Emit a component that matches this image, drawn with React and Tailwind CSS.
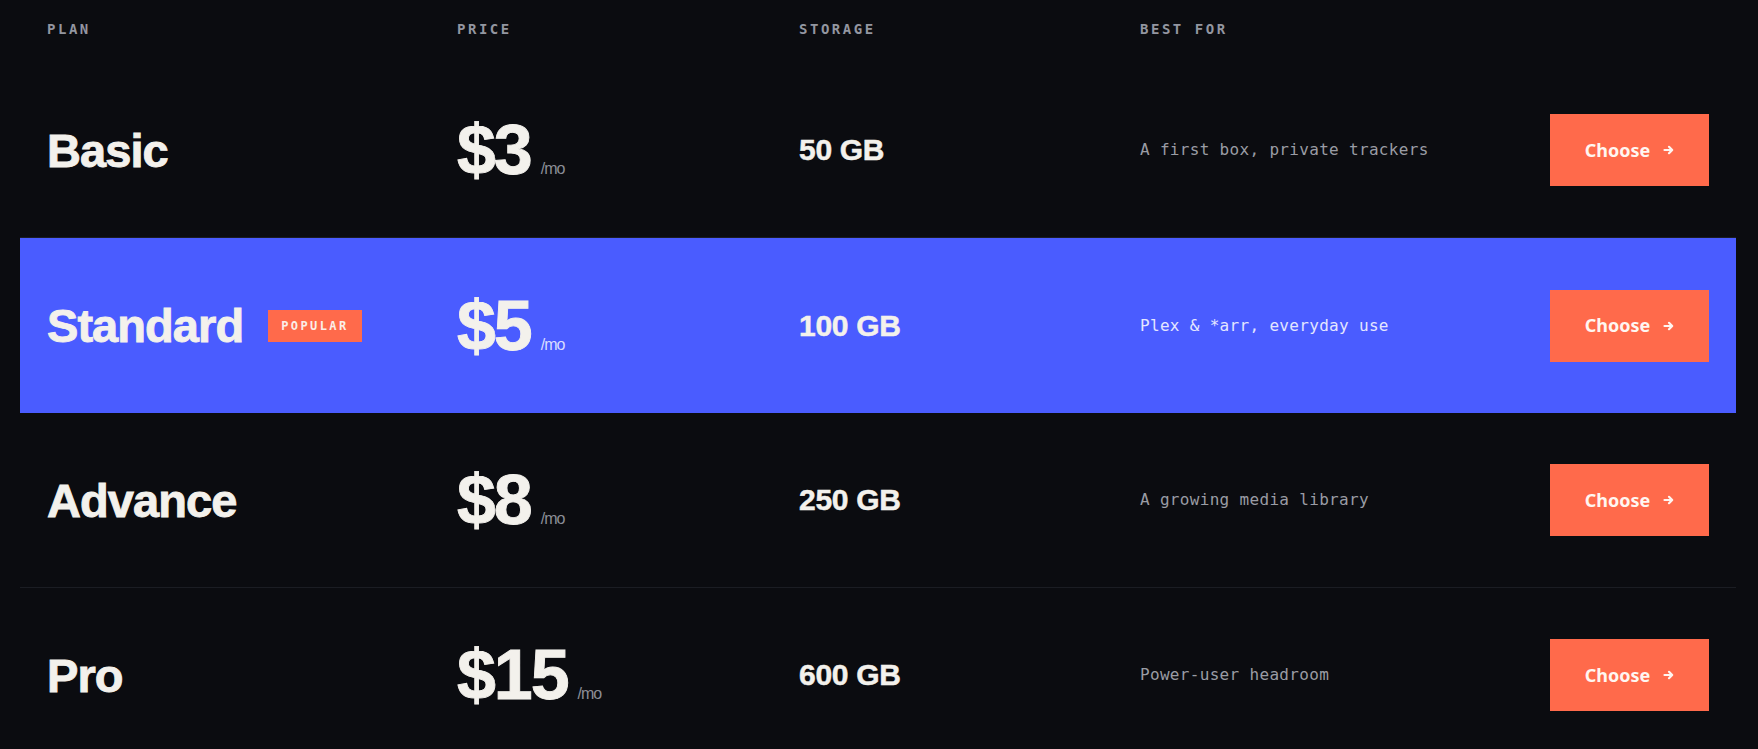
const plans = [
  { name: "Basic", price: "$3", storage: "50 GB", bestFor: "A first box, private trackers" },
  { name: "Standard", price: "$5", storage: "100 GB", bestFor: "Plex & *arr, everyday use", popular: true },
  { name: "Advance", price: "$8", storage: "250 GB", bestFor: "A growing media library" },
  { name: "Pro", price: "$15", storage: "600 GB", bestFor: "Power-user headroom" },
];

const sans = "font-['Liberation_Sans',Arial,sans-serif]";
const mono = "font-['DejaVu_Sans_Mono',monospace]";
// Liberation bold is lighter than the reference display face, so thicken it a bit
const heavy = "[-webkit-text-stroke:0.9px_#f3f1ec]";

function Arrow() {
  return (
    <svg width="11" height="10" viewBox="0 0 11 10" fill="none" stroke="currentColor" strokeWidth="2.2" strokeLinecap="round" strokeLinejoin="round">
      <path d="M1.5 5h7.5M6 1.8 9.2 5 6 8.2" />
    </svg>
  );
}

function PlanRow({ plan }) {
  const hl = plan.popular;
  return (
    <div
      className={`grid h-[175px] grid-cols-[410px_342px_341px_1fr] items-center px-[27px] ${
        hl ? "bg-[#4a5cff]" : "border-b border-[#1b1d23]"
      }`}
    >
      <div className="flex items-center gap-[25px]">
        <span className={`${sans} ${heavy} text-[47px] font-bold leading-none tracking-[-0.02em] text-[#f3f1ec]`}>
          {plan.name}
        </span>
        {hl && (
          <span className={`${mono} flex h-[32px] items-center bg-[#ff6a4b] px-[13px] text-[12px] font-bold tracking-[0.2em] text-[#fbeee8]`}>
            POPULAR
          </span>
        )}
      </div>
      <div className="flex items-baseline">
        <span className={`${sans} ${heavy} text-[70px] font-bold leading-none tracking-[-0.03em] text-[#f3f1ec]`}>
          {plan.price}
        </span>
        <span className={`${sans} ml-[10px] text-[16px] tracking-[-0.06em] ${hl ? "text-[#d9dcff]" : "text-[#8b8e97]"}`}>
          /mo
        </span>
      </div>
      <div className={`${sans} [-webkit-text-stroke:0.5px_#f3f1ec] text-[30px] font-bold leading-none tracking-[-0.01em] text-[#f3f1ec]`}>
        {plan.storage}
      </div>
      <div className="flex items-center justify-between">
        <span className={`${mono} text-[16px] tracking-[0.02em] ${hl ? "text-[#e4e6ff]" : "text-[#9a9ca4]"}`}>
          {plan.bestFor}
        </span>
        <button className="flex h-[72px] w-[159px] items-center justify-center gap-[13px] bg-[#ff6a4b] font-['Noto_Sans',sans-serif] text-[18px] font-bold text-[#fff6f1]">
          Choose <Arrow />
        </button>
      </div>
    </div>
  );
}

export default function App() {
  return (
    <div className="h-[749px] overflow-hidden bg-[#0b0c10] pl-[20px] pr-[22px]">
      <div
        className={`${mono} grid h-[63px] grid-cols-[410px_342px_341px_1fr] items-start px-[27px] pt-[19px] text-[14px] font-bold tracking-[0.18em] text-[#9396a0]`}
      >
        <span>PLAN</span>
        <span>PRICE</span>
        <span>STORAGE</span>
        <span>BEST FOR</span>
      </div>
      {plans.map((plan) => (
        <PlanRow key={plan.name} plan={plan} />
      ))}
    </div>
  );
}
